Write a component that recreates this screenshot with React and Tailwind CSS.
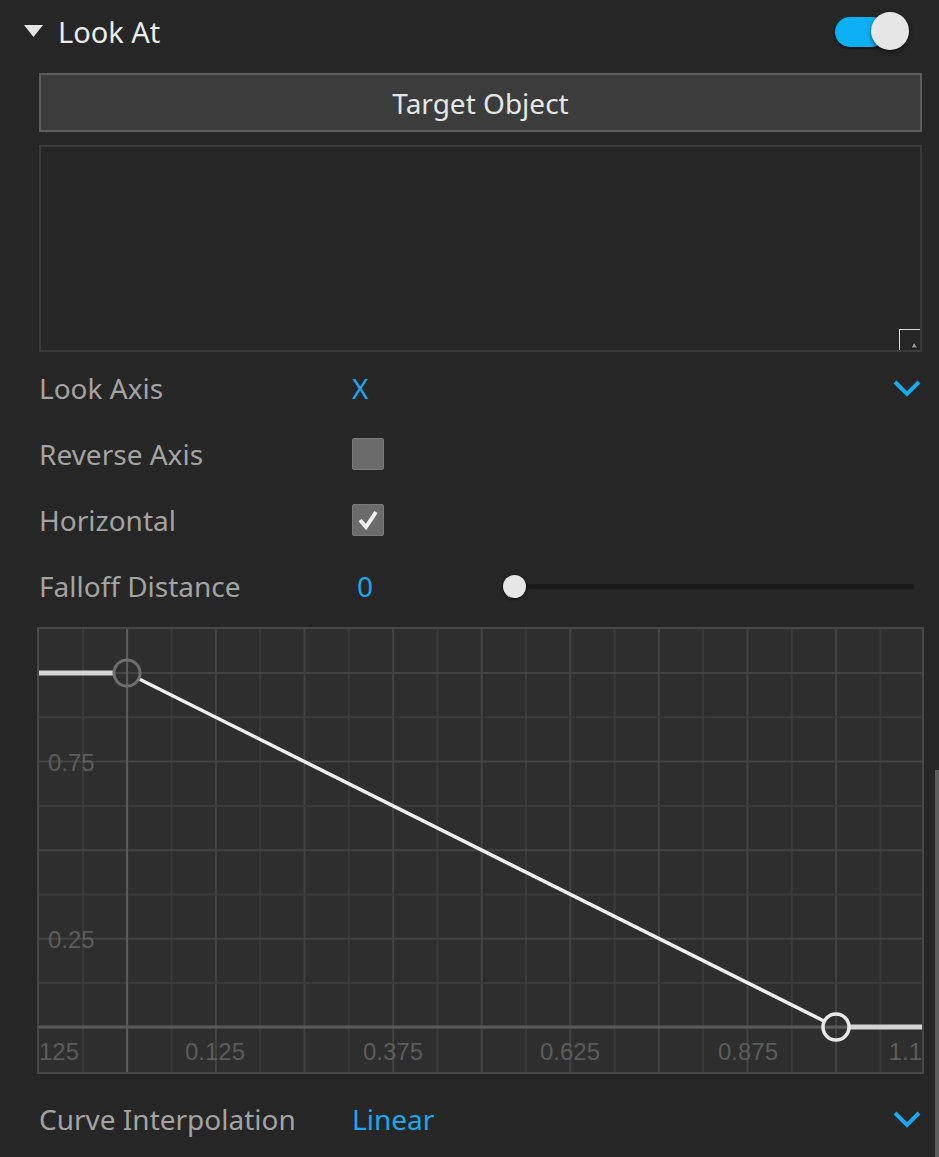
import React from 'react';

const font = { fontFamily: '"Noto Sans", "Open Sans", sans-serif' };

function Chevron() {
  return (
    <svg width="30" height="18" viewBox="0 0 30 18" className="shrink-0">
      <polyline points="3,3 15,15 27,3" fill="none" stroke="#1ca8ec" strokeWidth="4" strokeLinejoin="miter" />
    </svg>
  );
}

function Checkbox({ checked }) {
  return (
    <div className="w-[32px] h-[32px] rounded-[2px] bg-[#6b6b6b] border border-[#7a7a7a] flex items-center justify-center">
      {checked && (
        <svg width="24" height="22" viewBox="0 0 24 22">
          <polyline points="4,11 10,18 20,3" fill="none" stroke="#f2f2f2" strokeWidth="4" />
        </svg>
      )}
    </div>
  );
}

function Row({ label, children, className = '' }) {
  return (
    <div className={'flex items-center h-[66px] ' + className}>
      <div className="w-[313px] shrink-0 text-[28px] text-[#a3a3a3]">{label}</div>
      <div className="flex-1 flex items-center">{children}</div>
    </div>
  );
}

function CurveChart() {
  // inner origin sits at page (39, 629)
  const vx = [];
  for (let k = 0; k < 19; k++) vx.push(83 + 44.3 * k - 39);
  const hy = [];
  for (let j = 0; j < 9; j++) hy.push(673 + 44.3 * j - 629);
  const ax = 127 - 39;
  const ay = 1027 - 629;
  const p0 = { x: 88, y: 44 };
  const p1 = { x: 797, y: 398 };
  const r = 13;
  const dx = p1.x - p0.x;
  const dy = p1.y - p0.y;
  const len = Math.hypot(dx, dy);
  const ux = dx / len;
  const uy = dy / len;
  const xLabels = [
    ['0.125', 176],
    ['0.375', 354],
    ['0.625', 531],
    ['0.875', 709],
  ];
  return (
    <div className="-mx-[2px] mt-[8px] h-[447px] border-2 border-[#474747] bg-[#2e2e2e] overflow-hidden">
      <svg width="883" height="443" viewBox="0 0 883 443" className="block">
        {vx.map((x, i) => (
          <line key={'v' + i} x1={x} y1="0" x2={x} y2="443" stroke={i % 2 === 1 ? '#434343' : '#3a3a3a'} strokeWidth="2" />
        ))}
        {hy.map((y, i) => (
          <line key={'h' + i} x1="0" y1={y} x2="883" y2={y} stroke={i % 2 === 0 ? '#434343' : '#3a3a3a'} strokeWidth="2" />
        ))}
        <line x1={ax} y1="0" x2={ax} y2="443" stroke="#5a5a5a" strokeWidth="2" />
        <line x1="0" y1={ay} x2="883" y2={ay} stroke="#5a5a5a" strokeWidth="3" />

        <g fill="#5c5c5c" fontSize="24" style={{ fontFamily: '"Liberation Sans", Arial, sans-serif' }}>
          <text x="9" y="142">0.75</text>
          <text x="9" y="319">0.25</text>
          <text x="0" y="431">125</text>
          {xLabels.map(([t, x]) => (
            <text key={t} x={x} y="431" textAnchor="middle">{t}</text>
          ))}
          <text x="883" y="431" textAnchor="end">1.1</text>
        </g>

        <line x1="0" y1={p0.y} x2={p0.x - r} y2={p0.y} stroke="#d4d4d4" strokeWidth="5" />
        <line x1={p0.x + ux * r} y1={p0.y + uy * r} x2={p1.x - ux * r} y2={p1.y - uy * r} stroke="#f0f0f0" strokeWidth="3.5" />
        <line x1={p1.x + r} y1={p1.y} x2="883" y2={p1.y} stroke="#d4d4d4" strokeWidth="5" />
        <circle cx={p0.x} cy={p0.y} r={r} fill="none" stroke="#6e6e6e" strokeWidth="3" />
        <circle cx={p1.x} cy={p1.y} r={r} fill="none" stroke="#e8e8e8" strokeWidth="3.5" />
      </svg>
    </div>
  );
}

export default function App() {
  return (
    <div className="relative w-[939px] h-[1157px] bg-[#262626] overflow-hidden" style={font}>
      <header className="flex items-center justify-between h-[62px] pl-[24px] pr-[30px]">
        <div className="flex items-center gap-[15px]">
          <svg width="19" height="12" viewBox="0 0 19 12">
            <polygon points="0,0 19,0 9.5,12" fill="#e6e6e6" />
          </svg>
          <span className="text-[29px] text-[#ececec] leading-none">Look At</span>
        </div>
        <div className="relative w-[74px] h-[38px]">
          <div className="absolute left-0 top-[5px] w-[52px] h-[30px] rounded-full bg-[#0cb0f4] shadow-[0_2px_2px_rgba(0,0,0,0.5)]" />
          <div className="absolute right-0 top-0 w-[38px] h-[38px] rounded-full bg-[#e6e6e6] shadow-[0_2px_4px_rgba(0,0,0,0.5)]" />
        </div>
      </header>

      <div className="pl-[39px] pr-[17px]">
        <button className="mt-[11px] w-full h-[59px] bg-[#3c3c3c] border-2 border-[#5c5c5c] text-[28px] text-[#e6e6e6]">
          Target Object
        </button>

        <div className="relative mt-[13px] h-[207px] border-2 border-[#3a3a3a]">
          <div className="absolute right-0 bottom-0 w-[21px] h-[21px] border-l border-t border-[#dcdcdc]">
            <svg width="10" height="10" viewBox="0 0 10 10" className="absolute right-[1px] bottom-[1px]">
              <polygon points="2,9 5,3 9,9" fill="#9a9a9a" stroke="#111" strokeWidth="1" />
            </svg>
          </div>
        </div>

        <div className="mt-[3px]">
          <Row label="Look Axis">
            <span className="flex-1 text-[28px] text-[#1ca8ec]">X</span>
            <Chevron />
          </Row>
          <Row label="Reverse Axis">
            <Checkbox checked={false} />
          </Row>
          <Row label="Horizontal">
            <Checkbox checked />
          </Row>
          <Row label="Falloff Distance">
            <span className="w-[151px] pl-[5px] text-[28px] text-[#1ca8ec]">0</span>
            <div className="relative flex-1 h-[5px] bg-[#1a1a1a] rounded-full mr-[8px]">
              <div className="absolute left-0 top-[-9px] w-[23px] h-[23px] rounded-full bg-[#e6e6e6] shadow-[0_1px_3px_rgba(0,0,0,0.8)]" />
            </div>
          </Row>
        </div>

        <CurveChart />

        <Row label="Curve Interpolation" className="mt-[12px]">
          <span className="flex-1 text-[28px] text-[#1ca8ec]">Linear</span>
          <Chevron />
        </Row>
      </div>

      <div className="absolute right-0 top-[770px] bottom-0 w-[4px] bg-[#5e5e5e]" />
    </div>
  );
}
